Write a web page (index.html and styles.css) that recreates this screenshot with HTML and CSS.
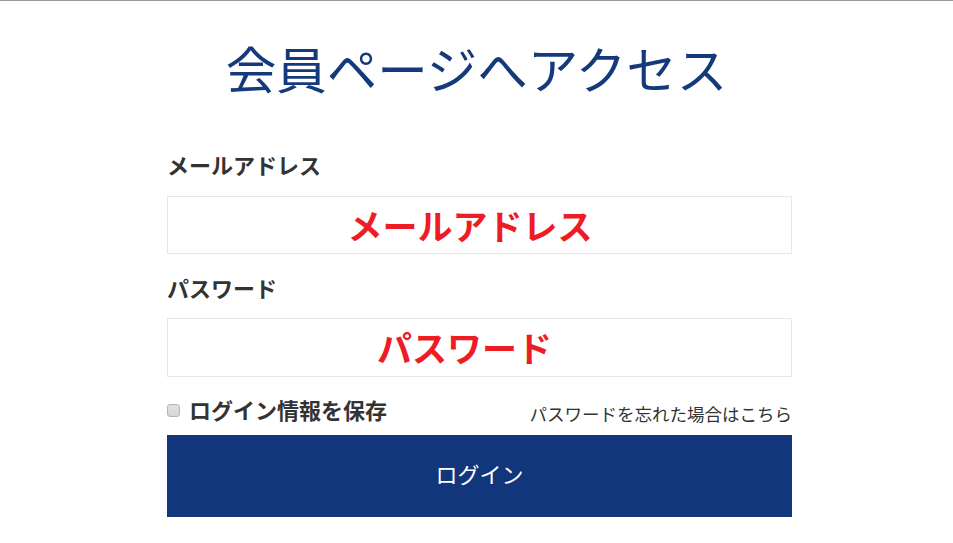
FILE: index.html
```html
<!DOCTYPE html>
<html lang="ja">
<head>
<meta charset="utf-8">
<title>会員ページへアクセス</title>
<link rel="stylesheet" href="styles.css">
</head>
<body>
<div class="page">
  <h1 class="title">会員ページへアクセス</h1>
  <form class="form">
    <label class="label" for="email">メールアドレス</label>
    <input class="field field-email" id="email" type="text" placeholder="メールアドレス">
    <label class="label label-pass" for="pass">パスワード</label>
    <input class="field field-pass" id="pass" type="password" placeholder="パスワード">
    <div class="row">
      <label class="remember"><input class="check" type="checkbox"><span>ログイン情報を保存</span></label>
      <a class="forgot" href="#">パスワードを忘れた場合はこちら</a>
    </div>
    <button class="submit" type="button">ログイン</button>
  </form>
</div>
</body>
</html>
```
FILE: styles.css
```css
html, body {
  margin: 0;
  padding: 0;
  background: #fff;
}
body {
  border-top: 1px solid #999;
  font-family: "Noto Sans CJK JP", "Noto Sans", sans-serif;
  color: #333;
}
.page {
  width: 625px;
  margin: 0 auto;
  padding-top: 36px;
  position: relative;
  left: 3px;
}
.title {
  margin: 0;
  font-size: 50.5px;
  line-height: 60px;
  font-weight: 400;
  color: #153a7c;
  text-align: center;
  position: relative;
  left: -3px;
}
.form {
  display: flex;
  flex-direction: column;
  margin-top: 52px;
}
.label {
  display: block;
  font-size: 22px;
  line-height: 30px;
  font-weight: 700;
  color: #333;
}
.label-pass {
  margin-top: 18px;
}
.field {
  display: block;
  box-sizing: border-box;
  width: 625px;
  height: 58px;
  margin-top: 17px;
  border: 1px solid #e8e8e8;
  background: #fff;
  outline: none;
  font-family: "Noto Sans CJK JP", sans-serif;
  font-size: 35px;
  font-weight: 700;
  text-align: center;
  padding: 0 19px 2px 0;
}
.field-pass {
  height: 59px;
  margin-top: 16px;
  padding-right: 30px;
}
.field::placeholder {
  color: #ee1c25;
  opacity: 1;
  font-weight: 700;
}
.row {
  display: flex;
  justify-content: space-between;
  align-items: center;
  height: 30px;
  margin-top: 17px;
}
.remember {
  display: flex;
  align-items: center;
  font-size: 22px;
  font-weight: 700;
  color: #333;
}
.check {
  appearance: none;
  -webkit-appearance: none;
  box-sizing: border-box;
  width: 13px;
  height: 13px;
  margin: 2px 9px 0 0;
  border: 1px solid #b4b4b4;
  border-radius: 3px;
  background: linear-gradient(#e2e2e2, #d6d6d6);
}
.forgot {
  font-size: 17.5px;
  color: #333;
  text-decoration: none;
  position: relative;
  top: 4px;
}
.submit {
  display: block;
  width: 625px;
  height: 82px;
  margin-top: 11px;
  border: 0;
  background: #12367b;
  color: #fff;
  font-family: "Noto Sans CJK JP", sans-serif;
  font-size: 22px;
  font-weight: 400;
  padding: 0 0 6px;
}
```
